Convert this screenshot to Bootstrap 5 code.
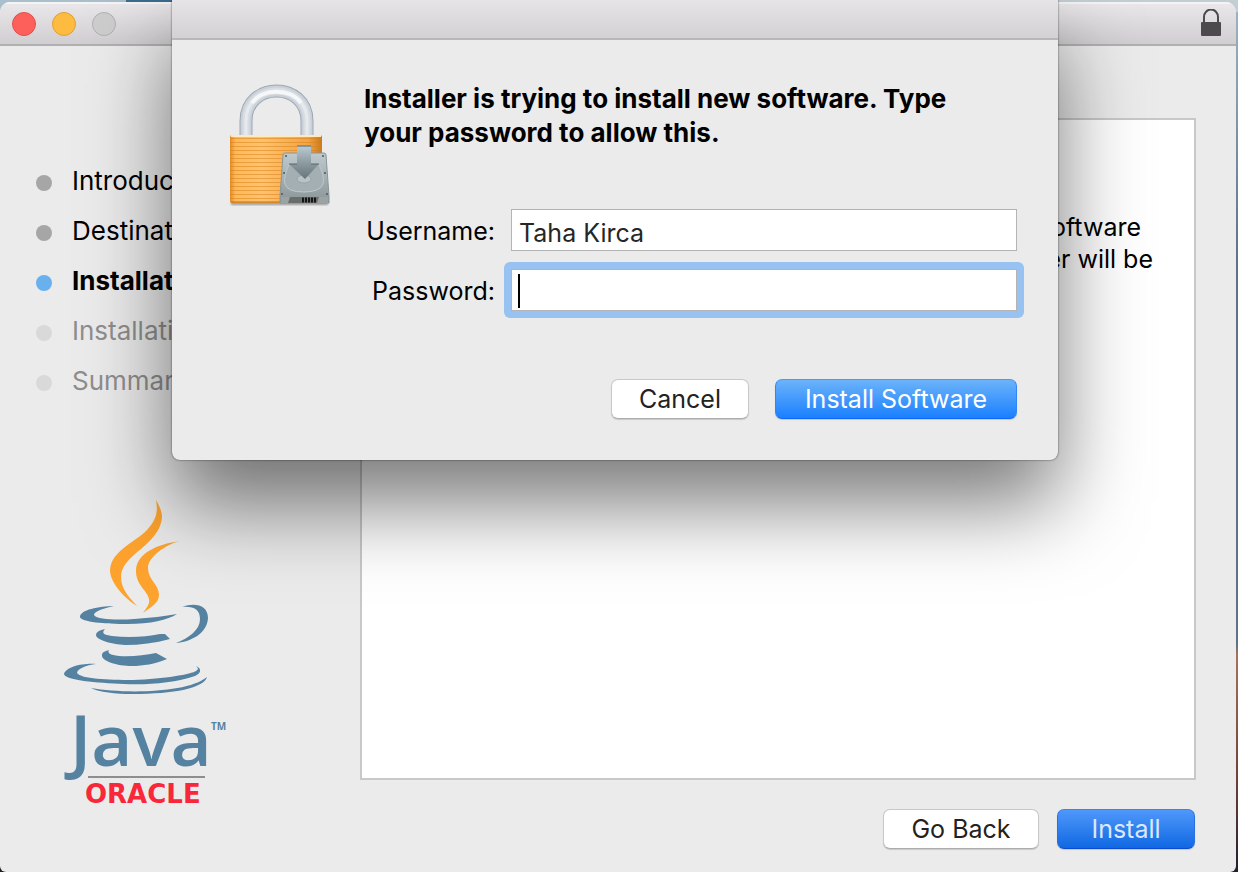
<!DOCTYPE html>
<html lang="en">
<head>
<meta charset="utf-8">
<meta name="viewport" content="width=device-width, initial-scale=1">
<title>Install Java</title>
<link href="https://cdn.jsdelivr.net/npm/bootstrap@5.3.0/dist/css/bootstrap.min.css" rel="stylesheet">
<style>
  body {
    font: 400 25px/32px Inter, "Liberation Sans", sans-serif;
    color: #000;
    background: linear-gradient(90deg, #a9bfcb 126px, #3d6c8e 126px, #3d6c8e 172px, #c3ced4 172px) 0 0 / 100% 12px no-repeat,
                linear-gradient(#9fb4c4, #5d7285 30%, #5d7285 74%, #a9705f 75%, #6b3f38 90%, #1d2030);
    padding: 2px 2px 0 0;
  }
  .installer { min-height: calc(100vh - 2px); background: #ebebeb; border-radius: 10px 10px 6px 6px; overflow: hidden; }
  .titlebar { height: 44px; background: linear-gradient(#eae8ea, #d1ced1); border-bottom: 2px solid #b1b0b1; box-shadow: inset 0 2px #f5f4f5; padding: 2px 14px 0 12px; }
  .light { width: 24px; height: 24px; border-radius: 50%; border: 1px solid; padding: 0; }
  .light-close { background: #fd5f5b; border-color: #e0514e; }
  .light-min { background: #fdbc40; border-color: #dfa032; }
  .light-max { background: #cdcdcd; border-color: #b0b0b0; }
  .side { width: 360px; padding: 110px 0 0 36px; }
  .step { height: 50px; gap: 20px; font-size: 26px; }
  .step::before { content: ""; width: 16px; height: 16px; margin-top: 3px; border-radius: 50%; background: #a6a6a6; }
  .step-now { font-weight: 700; }
  .step-now::before { background: #69b0ee; }
  .step-later { color: #8e8e8e; }
  .step-later::before { background: #d9d9d9; }
  .brand { width: 200px; height: 330px; margin: 84px 0 0 4px; }
  .main { padding: 72px 40px 23px 0; }
  .pane { background: #fff; border: 2px solid #c8c8c8; padding: 91px 41px 27px; margin-bottom: 29px; }
  .pane-lead { padding-right: 12px; }
  .mac-btn { height: 40px; padding: 0; line-height: 37px; font-size: 25px; border-radius: 7px; border: 1px solid #c8c8c8; border-bottom-color: #acacac; background: #fff; color: #222; box-shadow: 0 1px 1px rgba(0,0,0,.15); }
  .mac-btn-blue { color: #fff; border-color: #4a9cf2 #2f86f8 #0f68f4; background: linear-gradient(#6cb3fa, #1a80ff); }
  .mac-btn-press { color: #dbe8fd; border-color: #3f83e8 #2b70e2 #0a4bd0; background: linear-gradient(#4f98fb, #1068e2); }
  .w-cancel, .w-install { width: 138px; }
  .w-back { width: 156px; }
  .w-soft { width: 242px; }
  .foot { gap: 18px; padding-right: 1px; }
  .sheet { left: 172px; right: 180px; top: 0; background: #ebebeb; border-radius: 0 0 8px 8px; box-shadow: 0 0 2px rgba(0,0,0,.7), 0 44px 84px rgba(0,0,0,.53); }
  .sheet-bar { height: 40px; background: linear-gradient(#e6e4e6, #d3d1d3); border-bottom: 2px solid #b9b8b9; }
  .sheet-body { padding: 42px 41px 41px 48px; gap: 24px; }
  .sheet-actions { gap: 26px; }
  .lock-art { width: 120px; height: 140px; margin-top: -7px; }
  .message { font-size: 26px; line-height: 34px; font-weight: 700; margin-bottom: 59px; padding-right: 30px; }
  .fields { display: grid; grid-template-columns: 131px 1fr; gap: 18px 16px; margin-bottom: 68px; }
  .fields label { padding-top: 2px; }
  .mac-input { height: 42px; border: 1px solid #b4b4b4; border-radius: 0; padding: 6px 7px 0; font-size: 25px; line-height: 32px; color: #262626; background: #fff; }
  .mac-input-on { background: linear-gradient(#000, #000) 6px 4px / 2px 34px no-repeat #fff; }
  .focus-halo { background: #97c2f1; border-radius: 6px; padding: 7px; margin: -7px; }
</style>
</head>
<body>
<div class="installer d-flex flex-column">
  <header class="titlebar d-flex align-items-center justify-content-between">
    <div class="d-flex gap-3">
      <button type="button" class="light light-close" aria-label="Close"></button>
      <button type="button" class="light light-min" aria-label="Minimize"></button>
      <button type="button" class="light light-max" aria-label="Zoom" disabled></button>
    </div>
    <svg width="22" height="30" viewBox="0 0 22 30" aria-hidden="true">
      <path d="M4 15V8a7 7.500 0 0 1 14 0v7" fill="none" stroke="#4d4a4d" stroke-width="2"/>
      <rect x="1" y="13" width="20" height="14" rx="1" fill="#4d4a4d"/>
    </svg>
  </header>

  <div class="d-flex flex-grow-1">
    <aside class="side flex-shrink-0">
      <ol class="list-unstyled mb-0">
        <li class="step d-flex align-items-center">Introduction</li>
        <li class="step d-flex align-items-center">Destination</li>
        <li class="step step-now d-flex align-items-center">Installation</li>
        <li class="step step-later d-flex align-items-center">Installation</li>
        <li class="step step-later d-flex align-items-center">Summary</li>
      </ol>
      <svg class="brand d-block" viewBox="40 490 200 330" role="img" aria-label="Java, Oracle">
        <g fill="#fea32e">
          <path d="M156 500C160 507 162 512 162 517C161 533 147 544 135 554C127 561 121 568 121 577C121 590 131 599 137 606C127 600 110 584 110 570C111 551 134 543 147 530C157 519 158 511 156 500Z"/>
          <path d="M180 541C165 545 148 557 148 568C148 580 159 584 159 595C159 604 149 608 143 613C147 607 150 604 149 599C147 590 136 585 136 571C136 553 158 544 180 541Z"/>
        </g>
        <g fill="#5682a2">
          <path d="M114 606C105 608 94 611 94 615C97 620 119 620 134 619C150 618 165 616 177 614C168 620 150 624 128 624C105 624 81 622 80 617C80 610 99 606 114 606Z"/>
          <path d="M182 607C195 602 208 605 208 618C207 634 190 642 176 643C189 638 200 630 200 619C200 609 193 606 182 607Z"/>
          <path d="M105 629C101 633 104 635 112 636C128 638 146 637 160 634L165 634L170 639C155 643 140 645 125 645C111 644 96 640 96 635C96 632 100 630 105 629Z"/>
          <path d="M109 650C107 653 110 655 119 656C132 657 145 655 156 653L167 659C155 664 143 666 132 666C117 666 101 661 102 655C102 652 106 651 109 650Z"/>
          <path d="M96 664C86 665 77 669 77 673C81 679 108 680 133 680C164 679 192 674 196 671C199 669 198 668 196 666C203 669 200 674 195 676C175 683 148 685 124 684C97 683 64 680 64 674C66 667 82 663 96 664Z"/>
          <path d="M207 677C204 688 174 694 133 694C115 694 99 692 91 688C125 694 188 693 207 677Z"/>
        </g>
        <g font-family="'Open Sans', 'Noto Sans', sans-serif" fill="#5682a2">
          <text x="70" y="766" font-size="71" font-weight="600">Java</text>
          <text x="211" y="730" font-size="10" font-weight="700">TM</text>
        </g>
        <path d="M88 777H205" stroke="#8e8e8e" stroke-width="2"/>
        <text x="85" y="803" font-family="'DejaVu Sans', sans-serif" font-size="26" font-weight="700" fill="#f8283a">ORACLE</text>
      </svg>
    </aside>

    <main class="main d-flex flex-column flex-grow-1">
      <section class="pane flex-grow-1 text-end">
        <p class="pane-lead mb-0">this software</p>
        <p class="mb-0">computer will be</p>
      </section>
      <footer class="foot d-flex justify-content-end">
        <button type="button" class="btn mac-btn w-back">Go Back</button>
        <button type="button" class="btn mac-btn mac-btn-press w-install">Install</button>
      </footer>
    </main>
  </div>
</div>

<div class="sheet position-absolute" role="dialog" aria-labelledby="ask">
  <div class="sheet-bar"></div>
  <form class="sheet-body d-flex align-items-start">
    <svg class="lock-art flex-shrink-0" viewBox="220 75 120 140" aria-hidden="true">
      <defs>
        <linearGradient id="brass"><stop offset="0" stop-color="#e28b25"/><stop offset=".06" stop-color="#ffb95a"/><stop offset=".35" stop-color="#ffc26e"/><stop offset=".85" stop-color="#f3a343"/><stop offset="1" stop-color="#c87a20"/></linearGradient>
        <linearGradient id="steel" x1="0" y1="0" x2="0" y2="1"><stop offset="0" stop-color="#becace"/><stop offset="1" stop-color="#8b9598"/></linearGradient>
        <linearGradient id="arrow" x1="0" y1="0" x2="0" y2="1"><stop offset="0" stop-color="#b9cbd1"/><stop offset=".5" stop-color="#8d9ca1"/><stop offset="1" stop-color="#687478"/></linearGradient>
        <pattern id="ridges" width="8" height="4" patternUnits="userSpaceOnUse"><path d="M0 2.500H8" stroke="#d57f18" stroke-opacity=".5"/></pattern>
        <filter id="soft" x="-20%" y="-20%" width="140%" height="140%"><feGaussianBlur stdDeviation="1"/></filter>
      </defs>
      <path d="M231 202H328V205H231Z" fill="#777" opacity=".7" filter="url(#soft)"/>
      <g fill="none">
        <path d="M246 136V121C246 81 307 81 307 121V136" stroke="#9ea8b3" stroke-width="13"/>
        <path d="M246 136V121C246 81 307 81 307 121V136" stroke="#c9d0d8" stroke-width="11"/>
        <path d="M246 136V121C246 81 307 81 307 121V136" stroke="#d8dde3" stroke-width="7"/>
        <path d="M246 136V121C246 81 307 81 307 121V136" stroke="#e6e9ee" stroke-width="3"/>
        <path d="M252 103C262 88 291 88 301 103" stroke="#f6f7f9" stroke-width="4"/>
      </g>
      <rect x="230" y="135" width="92" height="68" rx="2" fill="url(#brass)"/>
      <rect x="230" y="138" width="92" height="65" rx="2" fill="url(#ridges)"/>
      <path d="M231 136H321" stroke="#ffe9bd" stroke-width="2"/>
      <path d="M231 202H321" stroke="#b9741f" stroke-width="1"/>
      <path d="M285 153H324Q326 153 326 155L329 196V203H280V196L283 155Q283 153 285 153Z" fill="url(#steel)" stroke="#8b9598"/>
      <path d="M281 197H328V203H281Z" fill="#9ba3a5"/>
      <path d="M290 197H319L317 203H288Z" fill="#6a6e6b"/>
      <path d="M302 200H316" stroke="#161616" stroke-width="5" stroke-dasharray="2 1"/>
      <path d="M290 163H318Q325 176 323 184Q320 192 304 192Q287 192 285 184Q283 176 290 163Z" fill="#a3afb2" stroke="#bdc9cc"/>
      <ellipse cx="304" cy="179" rx="7" ry="4" fill="#b7c3c7" stroke="#97a4a8"/>
      <g fill="#4d585b"><circle cx="286" cy="156" r="1"/><circle cx="323" cy="156" r="1"/><circle cx="284" cy="173" r="1"/><circle cx="325" cy="173" r="1"/><circle cx="282" cy="194" r="1"/><circle cx="327" cy="194" r="1"/></g>
      <path d="M297 146H311V164H319L305 179L289 164H297Z" fill="url(#arrow)"/>
      <path d="M297 146H311M289 164H297M311 164H319" stroke="#59666b" stroke-width="1"/>
    </svg>
    <div class="flex-grow-1">
      <h1 id="ask" class="message">Installer is trying to install new software. Type your password to allow this.</h1>
      <div class="fields">
        <label for="user" class="text-end align-self-center">Username:</label>
        <input id="user" type="text" class="form-control mac-input" value="Taha Kirca">
        <label for="pass" class="text-end align-self-center">Password:</label>
        <div class="focus-halo"><input id="pass" type="password" class="form-control mac-input mac-input-on"></div>
      </div>
      <div class="sheet-actions d-flex justify-content-end">
        <button type="button" class="btn mac-btn w-cancel">Cancel</button>
        <button type="button" class="btn mac-btn mac-btn-blue w-soft">Install Software</button>
      </div>
    </div>
  </form>
</div>
<script src="https://cdn.jsdelivr.net/npm/bootstrap@5.3.0/dist/js/bootstrap.bundle.min.js"></script>
</body>
</html>
